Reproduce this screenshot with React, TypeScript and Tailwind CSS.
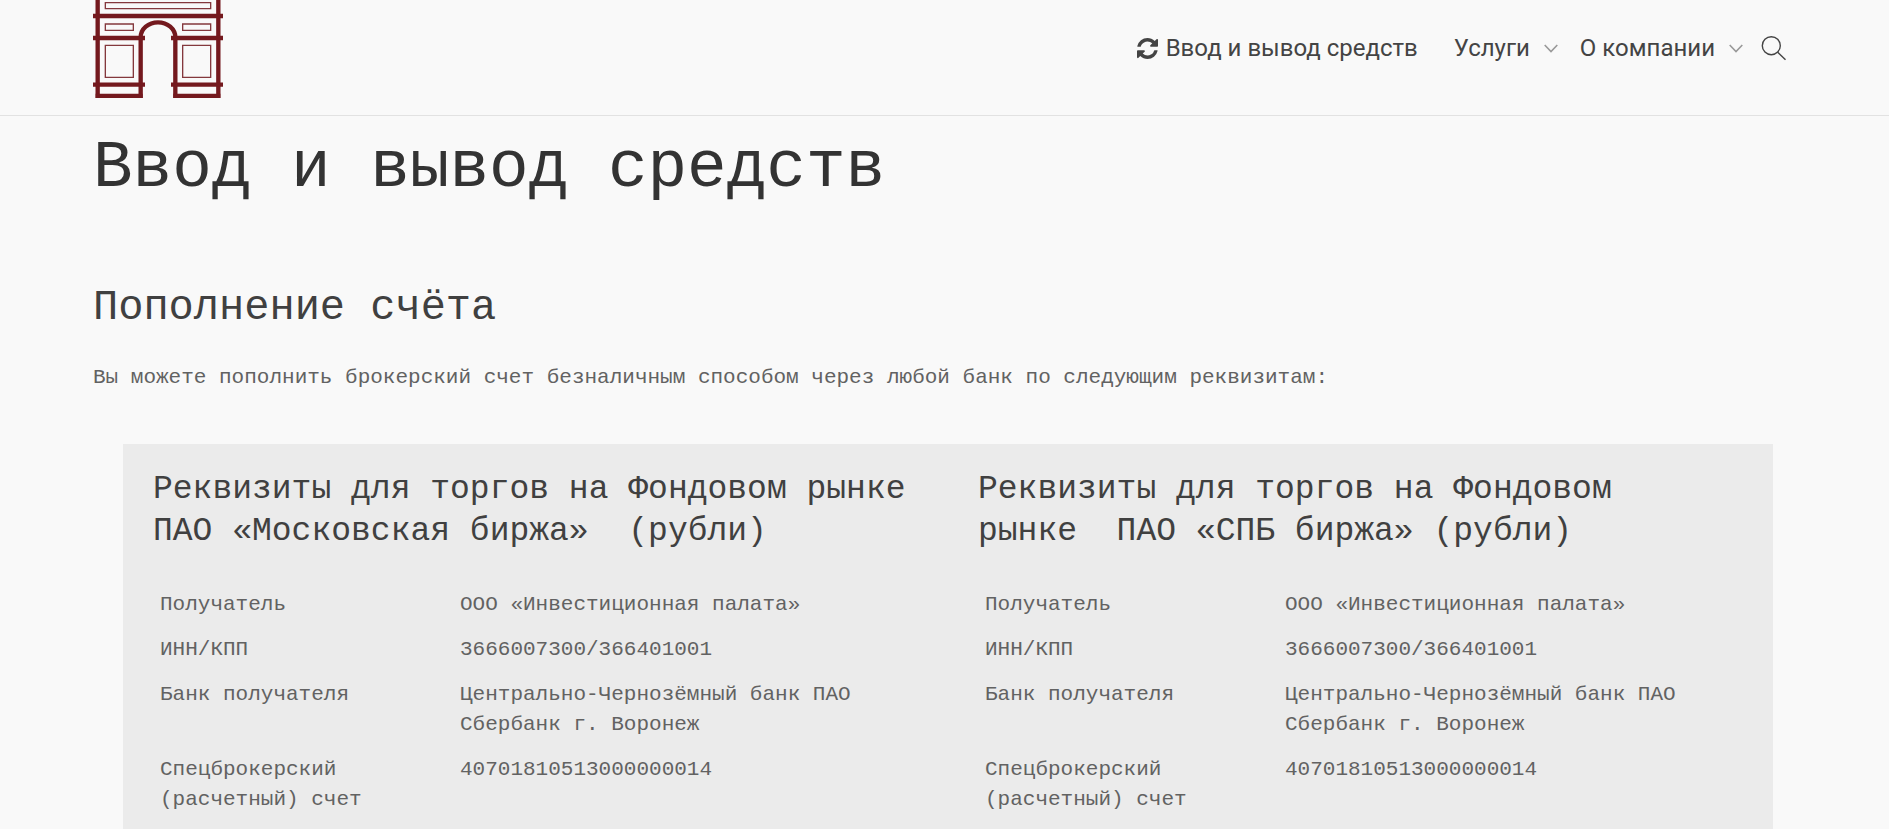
import React from 'react';

type Row = { label: string; value: string };

const rows: Row[] = [
  { label: 'Получатель', value: 'ООО «Инвестиционная палата»' },
  { label: 'ИНН/КПП', value: '3666007300/366401001' },
  { label: 'Банк получателя', value: 'Центрально-Чернозёмный банк ПАО Сбербанк г. Воронеж' },
  { label: 'Спецброкерский (расчетный) счет', value: '40701810513000000014' },
];

function ArchLogo() {
  return (
    <svg viewBox="39 0 390 294" className="block h-[98px] w-[130px]" fill="none" aria-hidden="true">
      <g stroke="#74191e" strokeWidth="13">
        <path d="M53 0V294M415 0V294" />
        <path d="M39 48H429M39 114H195M273 114H429M39 254H195M273 254H429M47 288H188M280 288H421" />
        <path d="M182 294V112A52 45 0 0 1 286 112V294" />
      </g>
      <g stroke="#84383d" strokeWidth="4">
        <path d="M76 8H392V26H76ZM76 72H160V91H76ZM308 72H392V91H308ZM76 136H160V232H76ZM308 136H392V232H308Z" />
      </g>
    </svg>
  );
}

function RefreshIcon() {
  return (
    <svg viewBox="0 0 1536 1536" className="size-[21px]" fill="currentColor" aria-hidden="true">
      <path d="M1511 928q0 5-1 7-64 268-268 434.500t-478 166.500q-146 0-282.500-55t-243.500-157l-129 129q-19 19-45 19t-45-19-19-45v-448q0-26 19-45t45-19h448q26 0 45 19t19 45-19 45l-137 137q71 66 161 102t187 36q134 0 250-65t186-179q11-17 53-117 8-23 30-23h192q13 0 22.500 9.500t9.500 22.500zm25-800v448q0 26-19 45t-45 19h-448q-26 0-45-19t-19-45 19-45l138-138q-148-137-349-137-134 0-250 65t-186 179q-11 17-53 117-8 23-30 23h-199q-13 0-22.500-9.500t-9.500-22.500v-7q65-268 270-434.500t480-166.500q146 0 284 55.500t245 156.500l130-129q19-19 45-19t45 19 19 45z" />
    </svg>
  );
}

function Chevron() {
  return (
    <svg viewBox="0 0 14 9" className="h-[9px] w-[14px] text-[#999]" fill="none" stroke="currentColor" strokeWidth="1.6" aria-hidden="true">
      <path d="M0.700 1L7 7.500L13.300 1" />
    </svg>
  );
}

function SearchIcon() {
  return (
    <svg viewBox="0 0 25 25" className="block size-[25px]" fill="none" stroke="currentColor" strokeWidth="1.4" aria-hidden="true">
      <circle cx="10.3" cy="9.7" r="9" />
      <path d="M16.700 16.200L24.500 23.700" />
    </svg>
  );
}

function Details({ title }: { title: string }) {
  return (
    <section className="px-[30px] pb-[30px]">
      <h3 className="text-[33px] leading-[42px] text-[#404040]">{title}</h3>
      <table className="mt-[29px] w-full table-fixed text-left">
        <tbody>
          {rows.map((row) => (
            <tr key={row.label} className="align-top">
              <th scope="row" className="w-[300px] px-[7px] pt-[8px] pb-[7px] font-normal">
                {row.label}
              </th>
              <td className="px-[7px] pt-[8px] pb-[7px]">{row.value}</td>
            </tr>
          ))}
        </tbody>
      </table>
    </section>
  );
}

export default function App() {
  return (
    <div className="min-h-screen bg-[#f9f9f9] font-['Liberation_Mono',monospace] text-[21px] leading-[30px] text-[#626262]">
      <header className="flex items-start justify-between border-b border-[#e2e2e2] pr-[103px] pb-[17px] pl-[93px]">
        <a href="#home" aria-label="Инвестиционная палата">
          <ArchLogo />
        </a>
        <nav className="flex items-center pt-[32px] font-[Roboto,sans-serif] text-[24px] leading-[32px] text-[#444]">
          <a href="#funds" className="mr-9 flex items-center gap-[8px]">
            <RefreshIcon />
            Ввод и вывод средств
          </a>
          <a href="#services" className="mr-[22px] flex items-center gap-[14px]">
            Услуги
            <Chevron />
          </a>
          <a href="#about" className="mr-[18px] flex items-center gap-[14px]">
            О компании
            <Chevron />
          </a>
          <button type="button" aria-label="Поиск">
            <SearchIcon />
          </button>
        </nav>
      </header>
      <main className="pt-[14px] pr-[86px] pl-[93px]">
        <h1 className="text-[66px] leading-[78px] text-[#333]">Ввод и вывод средств</h1>
        <h2 className="mt-[73px] text-[42px] leading-[54px] text-[#404040]">Пополнение счёта</h2>
        <p className="mt-[28px]">
          Вы можете пополнить брокерский счет безналичным способом через любой банк по следующим реквизитам:
        </p>
        <div className="mx-[30px] mt-[51px] grid grid-cols-2 bg-[#ebebeb] pt-[25px]">
          <Details title={'Реквизиты для торгов на Фондовом рынке ПАО «Московская биржа»\u00a0 (рубли)'} />
          <Details title={'Реквизиты для торгов на Фондовом рынке\u00a0 ПАО «СПБ биржа» (рубли)'} />
        </div>
      </main>
    </div>
  );
}
